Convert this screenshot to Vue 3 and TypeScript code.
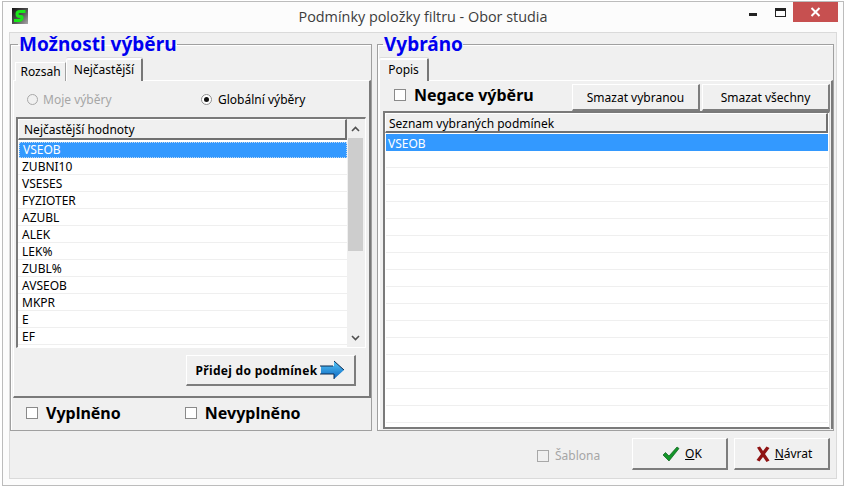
<script setup lang="ts">
const leftItems: string[] = ['VSEOB','ZUBNI10','VSESES','FYZIOTER','AZUBL','ALEK','LEK%','ZUBL%','AVSEOB','MKPR','E','EF']
const rightRows: string[] = ['VSEOB', ...Array<string>(16).fill('')]
</script>

<template>
  <div class="window">
    <header class="titlebar">
      <svg class="logo" width="16" height="16" viewBox="0 0 16 16">
        <defs>
          <linearGradient id="lg" x1="0" y1="0" x2="1" y2="1">
            <stop offset="0" stop-color="#111" />
            <stop offset="0.55" stop-color="#555" />
            <stop offset="1" stop-color="#aaa" />
          </linearGradient>
        </defs>
        <rect width="16" height="16" fill="url(#lg)" />
        <path d="M13.500 3.500H8Q5 3.500 5 6T8 8.500H9Q10.500 8.500 10 10.500T7 12.500H2" fill="none" stroke="#18e818" stroke-width="3" />
      </svg>
      <div class="title">Podmínky položky filtru - Obor studia</div>
      <div class="controls">
        <span class="min"></span>
        <span class="max"></span>
        <span class="close">
          <svg width="11" height="10" viewBox="0 0 11 10"><path d="M1.500 1l8 8M9.500 1l-8 8" stroke="#fff" stroke-width="2" /></svg>
        </span>
      </div>
    </header>

    <main class="client">
      <div class="groups">
        <fieldset class="group left">
          <legend>Možnosti výběru</legend>
          <div class="tabs">
            <span class="tab back">Rozsah</span>
            <span class="tab active">Nejčastější</span>
          </div>
          <section class="panel">
            <div class="radios">
              <label class="radio off"><i class="dot"></i>Moje výběry</label>
              <label class="radio on"><i class="dot"><b></b></i>Globální výběry</label>
            </div>
            <div class="list">
              <div class="list-main">
                <div class="head">Nejčastější hodnoty</div>
                <div v-for="(it, i) in leftItems" :key="it" class="row" :class="{ sel: i === 0 }">{{ it }}</div>
              </div>
              <div class="scroll">
                <svg class="arrow" width="9" height="6" viewBox="0 0 9 6"><path d="M1 5l3.500-3.500L8 5" fill="none" stroke="#505050" stroke-width="1.600" /></svg>
                <div class="track"><div class="thumb"></div></div>
                <svg class="arrow" width="9" height="6" viewBox="0 0 9 6"><path d="M1 1l3.500 3.500L8 1" fill="none" stroke="#505050" stroke-width="1.600" /></svg>
              </div>
            </div>
            <div class="add-wrap">
              <button class="btn add">Přidej do podmínek
                <svg width="25" height="20" viewBox="0 0 25 20">
                  <defs>
                    <linearGradient id="ar" x1="0" y1="0" x2="0" y2="1">
                      <stop offset="0" stop-color="#58c8f8" />
                      <stop offset="1" stop-color="#0a64c0" />
                    </linearGradient>
                  </defs>
                  <path d="M1 6H14V1L24 10L14 19V14H1Z" fill="url(#ar)" />
                  <path d="M0 6H13M0 14H14V19M14 1L24 10" fill="none" stroke="#0a2a50" stroke-width="1" />
                </svg>
              </button>
            </div>
          </section>
          <div class="fills">
            <label class="big"><i class="chk"></i>Vyplněno</label>
            <label class="big second"><i class="chk"></i>Nevyplněno</label>
          </div>
        </fieldset>

        <fieldset class="group right">
          <legend>Vybráno</legend>
          <div class="tabs">
            <span class="tab active popis">Popis</span>
          </div>
          <section class="panel rpanel">
            <div class="rtop">
              <label class="big neg"><i class="chk"></i>Negace výběru</label>
              <div class="rbtns">
                <button class="btn del">Smazat vybranou</button>
                <button class="btn del">Smazat všechny</button>
              </div>
            </div>
            <div class="rlist">
              <div class="head rhead">Seznam vybraných podmínek</div>
              <div v-for="(r, i) in rightRows" :key="i" class="row rrow" :class="{ sel: i === 0 }">{{ r }}</div>
            </div>
          </section>
        </fieldset>
      </div>

      <footer class="foot">
        <label class="tmpl"><i class="chk small"></i>Šablona</label>
        <button class="btn act">
          <svg width="18" height="16" viewBox="0 0 18 16"><path d="M1 9l2.500-2.500L7 10 15 1l2 1.500L7 15Z" fill="#13962a" stroke="#0b5c18" stroke-width=".7" /></svg>
          <span class="lbl"><u>O</u>K</span>
        </button>
        <button class="btn act">
          <svg width="14" height="16" viewBox="0 0 14 16"><path d="M1 1.500L4 0.500 7 5 10.500 0.500 13.500 2 9 8l4.500 6.500-3 1.500L7 11 3.500 15.500 0.500 14 5 8Z" fill="#8f1212" /></svg>
          <span class="lbl"><u>N</u>ávrat</span>
        </button>
      </footer>
    </main>
  </div>
</template>

<style>
html, body { margin: 0; background: #fff; }
</style>

<style scoped>
.window {
  width: 842px;
  height: 485px;
  margin: 1px 0 0 2px;
  box-sizing: border-box;
  border: 1px solid #bcbcbc;
  background: #fcfcfc;
  padding: 0 6px 6px 6px;
  display: flex;
  flex-direction: column;
  font: 12px "Noto Sans", sans-serif;
  color: #000;
  overflow: hidden;
}
.titlebar {
  height: 30px;
  flex: none;
  display: flex;
  align-items: flex-start;
}
.logo { margin: 6px 0 0 3px; flex: none; }
.title {
  flex: 1;
  text-align: center;
  font: 14.4px/30px "Open Sans", sans-serif;
  color: #3c3c3c;
  padding-left: 69px;
  white-space: nowrap;
}
.controls { display: flex; align-items: flex-start; margin-right: -1px; }
.min { width: 8px; height: 3px; background: #222; margin: 11px 18px 0 0; }
.max { width: 9px; height: 5px; border: 1px solid #222; border-top-width: 3px; margin: 6px 7px 0 0; }
.close {
  width: 45px; height: 20px; background: #c75050;
  display: flex; align-items: center; justify-content: center;
}
.client {
  flex: 1;
  min-height: 0;
  box-sizing: border-box;
  border: 1px solid #dadada;
  background: #f0f0f0;
  display: flex;
  flex-direction: column;
}
.groups { display: flex; height: 398px; flex: none; }
.group {
  margin: 0;
  min-width: 0;
  box-sizing: border-box;
  border: 1px solid #a0a0a0;
  box-shadow: inset 1px 1px 0 #fff;
  padding: 0;
  height: 398px;
  display: flex;
  flex-direction: column;
}
.group legend {
  font: bold 19px/22px "Noto Sans", sans-serif;
  color: #0000f0;
  padding: 0 0 0 1px;
  height: 22px;
  white-space: nowrap;
}
.left { width: 362px; margin-right: 5px; }
.left legend { margin-left: 7px; }
.right { width: 457px; }
.right legend { margin-left: 5px; }
.tabs { display: flex; align-items: flex-end; height: 23px; padding-left: 4px; flex: none; margin-top: 3px; position: relative; z-index: 1; margin-bottom: -1px; }
.right .tabs { padding-left: 1px; }
.tab {
  box-sizing: border-box;
  border-top: 1px solid #fff;
  border-left: 1px solid #fff;
  border-right: 1px solid #a0a0a0;
  background: #f0f0f0;
  text-align: center;
}
.tab.back { width: 51px; height: 19px; line-height: 18px; }
.tab.active {
  width: 77px; height: 23px; line-height: 21px;
  border-right: 2px solid #777;
  box-shadow: inset 0 1px 0 #fff, 0 -1px 0 #ddd;
  border-radius: 2px 2px 0 0;
}
.tab.popis { width: 50px; }
.panel {
  flex: none;
  margin: 0 0 0 2px;
  width: 358px;
  height: 318px;
  box-sizing: border-box;
  border-top: 1px solid #fff;
  border-left: 1px solid #fff;
  border-right: 2px solid #7a7a7a;
  border-bottom: 2px solid #7a7a7a;
  padding: 0 2px;
  display: flex;
  flex-direction: column;
}
.radios { height: 36px; display: flex; align-items: center; flex: none; padding: 1px 0 0 11px; box-sizing: border-box; }
.radio { display: flex; align-items: center; }
.radio.off { color: #a6a6a6; width: 174px; }
.dot {
  width: 11px; height: 11px; border-radius: 50%; background: #fff;
  border: 1px solid #909090; margin-right: 6px; box-sizing: border-box;
  display: flex; align-items: center; justify-content: center;
}
.off .dot { background: #f0f0f0; border-color: #a8a8a8; margin-right: 5px; }
.dot b { width: 5px; height: 5px; border-radius: 50%; background: #111; }
.list {
  height: 231px; flex: none;
  box-sizing: border-box;
  border: 2px solid #7a7a7a;
  border-right: 1px solid #fff;
  border-bottom: 1px solid #fff;
  display: flex;
  background: #f0f0f0;
  width: 350px;
  overflow: hidden;
}
.list-main { width: 329px; background: #fff; flex: none; }
.head {
  box-sizing: border-box;
  height: 21px; line-height: 20px; padding-left: 5px;
  background: #f0f0f0;
  border: 1px solid #fff;
  border-right: 2px solid #707070;
  border-bottom: 2px solid #707070;
  white-space: nowrap;
}
.row {
  box-sizing: border-box;
  height: 17px; line-height: 17px; padding-left: 4px;
  border-bottom: 1px solid #efefef;
  white-space: nowrap;
}
.row.sel { background: #3399ff; color: #fff; border-bottom: 0; margin: 2px 0 0 1px; height: 16px; line-height: 16px; padding-left: 4px; outline: 1px dotted #c0d8f0; outline-offset: -1px; }
.scroll { width: 17px; flex: none; display: flex; flex-direction: column; align-items: center; }
.arrow { flex: none; margin: 7px 0 6px; }
.track { flex: 1; width: 15px; background: #f0f0f0; }
.thumb { height: 113px; background: #cdcdcd; }
.add-wrap { flex: 1; display: flex; justify-content: flex-end; padding: 7px 11px 0 0; }
.btn {
  box-sizing: border-box;
  font: inherit;
  color: #000;
  background: #f0f0f0;
  border: 0;
  border-top: 1px solid #fff;
  border-left: 1px solid #fff;
  border-right: 2px solid #7d7d7d;
  border-bottom: 2px solid #7d7d7d;
  padding: 0;
  display: flex;
  align-items: center;
  justify-content: center;
}
.add { width: 170px; height: 31px; font-weight: bold; gap: 3px; letter-spacing: .3px; }
.fills { display: flex; align-items: center; height: 29px; padding: 0 0 0 15px; flex: none; }
.big {
  display: flex; align-items: center;
  font: bold 16px "Noto Sans", sans-serif;
  white-space: nowrap;
}
.big.second { margin-left: 64px; }
.chk {
  width: 12px; height: 12px; box-sizing: border-box; background: #fff;
  border: 1px solid #8a8a8a; margin-right: 8px; flex: none;
  display: block;
}
.rpanel { margin-left: 1px; width: 454px; height: 349px; border-bottom: 0; padding: 0 3px; }
.rtop { height: 30px; flex: none; display: flex; align-items: flex-start; }
.neg { margin: 3px 0 0 11px; width: 178px; flex: none; }
.rbtns { display: flex; gap: 2px; margin-top: 3px; flex: none; }
.del { width: 128px; height: 27px; flex: none; }
.rlist {
  flex: 1; min-height: 0;
  box-sizing: border-box;
  width: 447px;
  border: 2px solid #7a7a7a;
  border-right: 1px solid #dcdcdc;
  background: #fff;
  overflow: hidden;
}
.rhead { width: 443px; height: 20px; line-height: 19px; margin-bottom: 1px; padding-left: 3px; }
.rrow { width: 442px; margin-left: 1px; }
.row.rrow.sel { margin-top: 1px; margin-left: 1px; height: 17px; line-height: 19px; padding-left: 2px; outline: 0; }
.foot {
  flex: 1;
  display: flex;
  align-items: flex-start;
  padding-top: 7px;
}
.tmpl { display: flex; align-items: center; color: #a6a6a6; margin: 9px 0 0 527px; width: 96px; }
.chk.small { background: #f0f0f0; border-color: #a8a8a8; margin-right: 6px; }
.act { width: 97px; height: 32px; gap: 5px; margin-right: 6px; padding-left: 5px; }
.lbl { line-height: 16px; }
</style>
